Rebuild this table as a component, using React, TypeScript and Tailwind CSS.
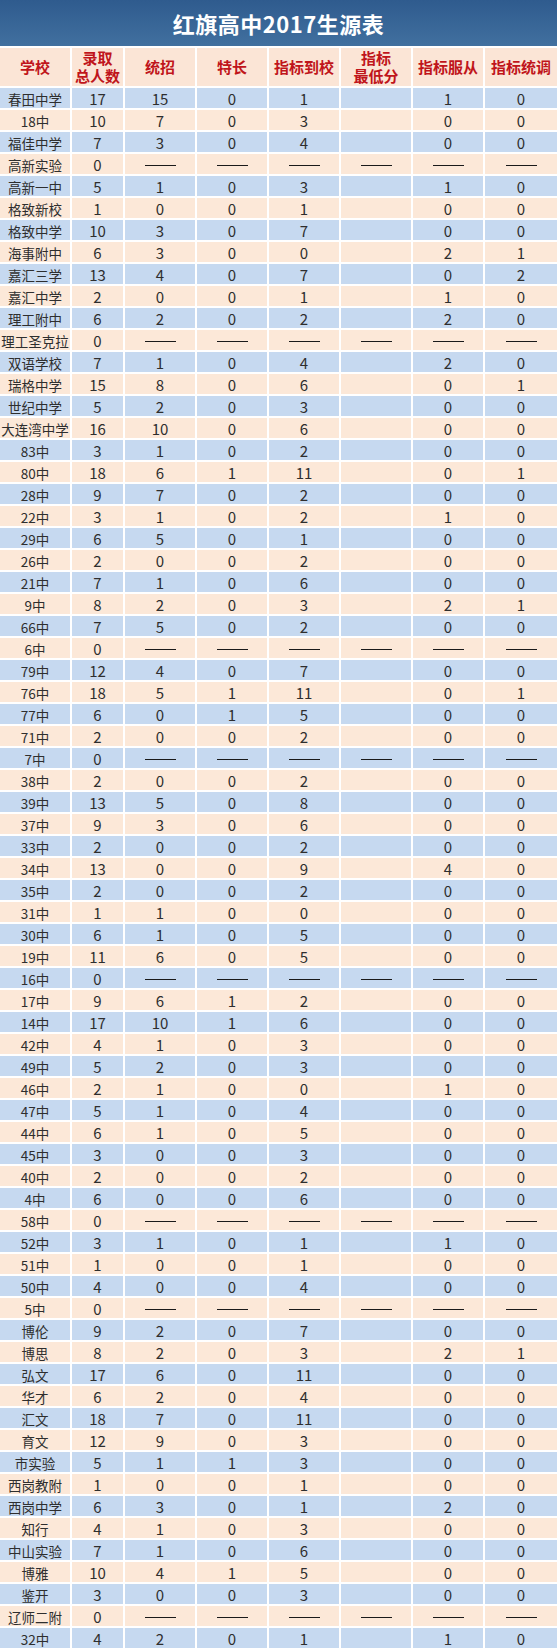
type Row = [string, number, ...(number | null)[]];

// null in the 最低分 column = empty cell; rows with only two entries are the "——" rows
const rows: Row[] = [
  ["春田中学", 17, 15, 0, 1, null, 1, 0],
  ["18中", 10, 7, 0, 3, null, 0, 0],
  ["福佳中学", 7, 3, 0, 4, null, 0, 0],
  ["高新实验", 0],
  ["高新一中", 5, 1, 0, 3, null, 1, 0],
  ["格致新校", 1, 0, 0, 1, null, 0, 0],
  ["格致中学", 10, 3, 0, 7, null, 0, 0],
  ["海事附中", 6, 3, 0, 0, null, 2, 1],
  ["嘉汇三学", 13, 4, 0, 7, null, 0, 2],
  ["嘉汇中学", 2, 0, 0, 1, null, 1, 0],
  ["理工附中", 6, 2, 0, 2, null, 2, 0],
  ["理工圣克拉", 0],
  ["双语学校", 7, 1, 0, 4, null, 2, 0],
  ["瑞格中学", 15, 8, 0, 6, null, 0, 1],
  ["世纪中学", 5, 2, 0, 3, null, 0, 0],
  ["大连湾中学", 16, 10, 0, 6, null, 0, 0],
  ["83中", 3, 1, 0, 2, null, 0, 0],
  ["80中", 18, 6, 1, 11, null, 0, 1],
  ["28中", 9, 7, 0, 2, null, 0, 0],
  ["22中", 3, 1, 0, 2, null, 1, 0],
  ["29中", 6, 5, 0, 1, null, 0, 0],
  ["26中", 2, 0, 0, 2, null, 0, 0],
  ["21中", 7, 1, 0, 6, null, 0, 0],
  ["9中", 8, 2, 0, 3, null, 2, 1],
  ["66中", 7, 5, 0, 2, null, 0, 0],
  ["6中", 0],
  ["79中", 12, 4, 0, 7, null, 0, 0],
  ["76中", 18, 5, 1, 11, null, 0, 1],
  ["77中", 6, 0, 1, 5, null, 0, 0],
  ["71中", 2, 0, 0, 2, null, 0, 0],
  ["7中", 0],
  ["38中", 2, 0, 0, 2, null, 0, 0],
  ["39中", 13, 5, 0, 8, null, 0, 0],
  ["37中", 9, 3, 0, 6, null, 0, 0],
  ["33中", 2, 0, 0, 2, null, 0, 0],
  ["34中", 13, 0, 0, 9, null, 4, 0],
  ["35中", 2, 0, 0, 2, null, 0, 0],
  ["31中", 1, 1, 0, 0, null, 0, 0],
  ["30中", 6, 1, 0, 5, null, 0, 0],
  ["19中", 11, 6, 0, 5, null, 0, 0],
  ["16中", 0],
  ["17中", 9, 6, 1, 2, null, 0, 0],
  ["14中", 17, 10, 1, 6, null, 0, 0],
  ["42中", 4, 1, 0, 3, null, 0, 0],
  ["49中", 5, 2, 0, 3, null, 0, 0],
  ["46中", 2, 1, 0, 0, null, 1, 0],
  ["47中", 5, 1, 0, 4, null, 0, 0],
  ["44中", 6, 1, 0, 5, null, 0, 0],
  ["45中", 3, 0, 0, 3, null, 0, 0],
  ["40中", 2, 0, 0, 2, null, 0, 0],
  ["4中", 6, 0, 0, 6, null, 0, 0],
  ["58中", 0],
  ["52中", 3, 1, 0, 1, null, 1, 0],
  ["51中", 1, 0, 0, 1, null, 0, 0],
  ["50中", 4, 0, 0, 4, null, 0, 0],
  ["5中", 0],
  ["博伦", 9, 2, 0, 7, null, 0, 0],
  ["博思", 8, 2, 0, 3, null, 2, 1],
  ["弘文", 17, 6, 0, 11, null, 0, 0],
  ["华才", 6, 2, 0, 4, null, 0, 0],
  ["汇文", 18, 7, 0, 11, null, 0, 0],
  ["育文", 12, 9, 0, 3, null, 0, 0],
  ["市实验", 5, 1, 1, 3, null, 0, 0],
  ["西岗教附", 1, 0, 0, 1, null, 0, 0],
  ["西岗中学", 6, 3, 0, 1, null, 2, 0],
  ["知行", 4, 1, 0, 3, null, 0, 0],
  ["中山实验", 7, 1, 0, 6, null, 0, 0],
  ["博雅", 10, 4, 1, 5, null, 0, 0],
  ["鉴开", 3, 0, 0, 3, null, 0, 0],
  ["辽师二附", 0],
  ["32中", 4, 2, 0, 1, null, 1, 0],
];

const headers = ["学校", "录取\n总人数", "统招", "特长", "指标到校", "指标\n最低分", "指标服从", "指标统调"];

const cols = "grid grid-cols-[72px_53px_72px_72px_72px_72px_72px_1fr]";

const Dash = () => <span className="block w-[31px] border-t border-[#1a1a1a]" />;

const App = () => {
  return (
    <div
      className="w-[558px] bg-white pr-px"
      style={{ fontFamily: '"Noto Sans CJK SC", "Noto Sans", sans-serif' }}
    >
      {/* title bar */}
      <div className="h-[48px] flex items-center justify-center bg-gradient-to-b from-[#2f5b8e] to-[#41709f] border-b-2 border-white">
        <span className="text-white text-[22px] font-bold tracking-[0.5px]">红旗高中2017生源表</span>
      </div>

      {/* header row */}
      <div className={`${cols} h-[40px] bg-[#fbe5d6] border-b-2 border-white`}>
        {headers.map((h, i) => (
          <div
            key={i}
            className="flex items-center justify-center text-center whitespace-pre-line text-[15px] leading-[18px] font-bold text-[#c0151b] border-r-2 border-white last:border-r-0"
          >
            {h}
          </div>
        ))}
      </div>

      {rows.map((r, idx) => {
        const [name, total, ...rest] = r;
        const empty = r.length === 2;
        return (
          <div
            key={idx}
            className={`${cols} h-[22px] border-b-2 border-white text-[15px] text-[#2e2e2e] ${
              idx % 2 === 0 ? "bg-[#c6d9f0]" : "bg-[#fce8d8]"
            }`}
          >
            <div className="flex items-center justify-center border-r-2 border-white text-[13.5px] whitespace-nowrap">
              {name}
            </div>
            <div className="flex items-center justify-center border-r-2 border-white">{total}</div>
            {Array.from({ length: 6 }).map((_, c) => (
              <div
                key={c}
                className="flex items-center justify-center border-r-2 border-white last:border-r-0"
              >
                {empty ? <Dash /> : rest[c] ?? ""}
              </div>
            ))}
          </div>
        );
      })}
    </div>
  );
};

export default App;
